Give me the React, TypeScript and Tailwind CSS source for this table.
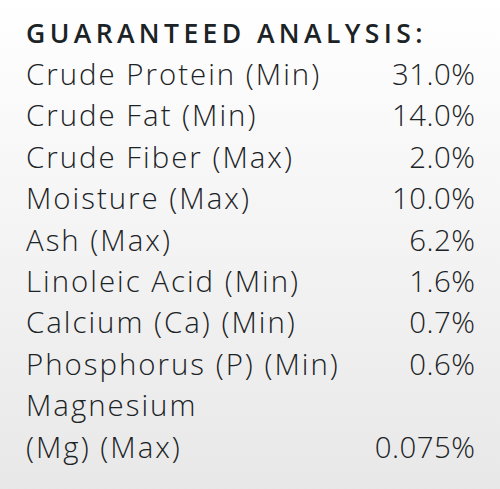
import React from 'react';

// Guaranteed analysis rows (label, value)
const rows: [string, string][] = [
    ['Crude Protein (Min)', '31.0%'],
    ['Crude Fat (Min)', '14.0%'],
    ['Crude Fiber (Max)', '2.0%'],
    ['Moisture (Max)', '10.0%'],
    ['Ash (Max)', '6.2%'],
    ['Linoleic Acid (Min)', '1.6%'],
    ['Calcium (Ca) (Min)', '0.7%'],
    ['Phosphorus (P) (Min)', '0.6%'],
];

const App = () => {
    return (
        <div className="w-[500px] h-[489px] bg-linear-to-b from-white to-[#e8e8e8] text-[#1b2326] pr-[25px] pl-[26px] pt-[13px] font-['Open_Sans',sans-serif]">
            <h1 className="text-[26.5px] leading-[41px] font-semibold tracking-[4.4px]">GUARANTEED ANALYSIS:</h1>
            <div className="flex flex-col text-[29.4px] leading-[41.4px] font-light">
                {rows.map(([label, value]) => (
                    <div key={label} className="flex justify-between">
                        <span className="tracking-[2px]">{label}</span>
                        <span className="tracking-[0.5px] -mr-[0.5px]">{value}</span>
                    </div>
                ))}
                <div className="tracking-[2px]">Magnesium</div>
                <div className="flex justify-between">
                    <span className="tracking-[2px]">(Mg) (Max)</span>
                    <span className="tracking-[0.5px] -mr-[0.5px]">0.075%</span>
                </div>
            </div>
        </div>
    );
};

export default App;
